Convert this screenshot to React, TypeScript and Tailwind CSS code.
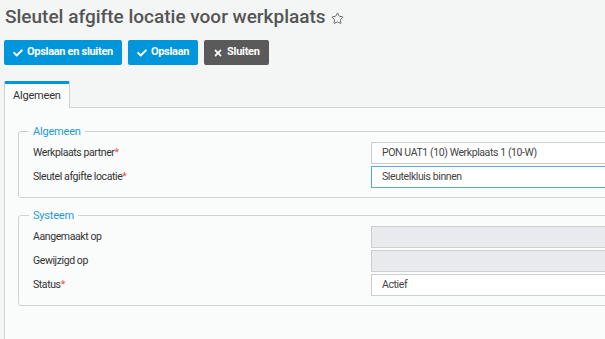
import { Star } from 'lucide-react'
import { FaCheck, FaTimes } from 'react-icons/fa'

type Row = {
  label: string
  required?: boolean
  value?: string
  disabled?: boolean
  focused?: boolean
}

const ALGEMEEN: Row[] = [
  { label: 'Werkplaats partner', required: true, value: 'PON UAT1 (10) Werkplaats 1 (10-W)' },
  { label: 'Sleutel afgifte locatie', required: true, value: 'Sleutelkluis binnen', focused: true },
]

const SYSTEEM: Row[] = [
  { label: 'Aangemaakt op', disabled: true },
  { label: 'Gewijzigd op', disabled: true },
  { label: 'Status', required: true, value: 'Actief' },
]

function Section({ title, rows }: { title: string; rows: Row[] }) {
  return (
    <fieldset className="border border-[#cfd2d3] rounded-[3px] pl-[10px] pb-[9px]">
      <legend className="px-1 text-[11px] leading-[15px] tracking-[-0.2px] text-[#1f9ad8]">{title}</legend>
      <div className="flex flex-col gap-[2px] mt-[3px]">
        {rows.map((r) => (
          <div key={r.label} className="flex items-center h-[22px]">
            <div className="w-[342px] pl-1 text-[10.5px] tracking-[-0.4px] text-[#333]">
              {r.label}
              {r.required && <span className="text-[#e2524b]">*</span>}
            </div>
            <div
              className={`flex-1 h-[22px] flex items-center px-[10px] text-[10.5px] tracking-[-0.4px] text-[#444] border ${
                r.focused ? 'border-[#55a9d6]' : 'border-[#ccced2]'
              } ${r.disabled ? 'bg-[#e8eaed]' : 'bg-white'}`}
            >
              {r.value}
            </div>
          </div>
        ))}
      </div>
    </fieldset>
  )
}

export default function App() {
  return (
    <div className="w-[605px] h-[339px] overflow-hidden bg-[#f4f6f6] font-['Roboto',sans-serif]">
      <div className="w-[660px]">
        {/* Header */}
        <div className="flex items-center gap-[5px] pl-[5px] pt-[5px] h-[29px]">
          <h1 className="text-[19px] leading-[24px] font-medium text-[#555]">
            Sleutel afgifte locatie voor werkplaats
          </h1>
          <Star size={13} strokeWidth={1.6} className="text-[#555] mt-[2px]" />
        </div>

        {/* Toolbar */}
        <div className="flex gap-[6px] pl-[4px] mt-[11px]">
          <button type="button" className="h-[25px] px-[9px] rounded-[2px] bg-[#0096db] text-white text-[11px] tracking-[-0.3px] font-bold flex items-center gap-[4px]">
            <FaCheck size={10} />
            Opslaan en sluiten
          </button>
          <button type="button" className="h-[25px] px-[9px] rounded-[2px] bg-[#0096db] text-white text-[11px] tracking-[-0.3px] font-bold flex items-center gap-[4px]">
            <FaCheck size={10} />
            Opslaan
          </button>
          <button type="button" className="h-[25px] px-[9px] rounded-[2px] bg-[#5a5a5a] text-white text-[11px] tracking-[-0.3px] font-bold flex items-center gap-[4px]">
            <FaTimes size={10} />
            Sluiten
          </button>
        </div>

        {/* Tabs */}
        <div className="flex pl-[4px] mt-[16px]">
          <div className="h-[27px] -mb-px px-[8px] flex items-center bg-[#fafbfb] border border-[#cfd2d3] border-b-0 border-t-[3px] border-t-[#0096db] rounded-t-[2px] text-[11px] tracking-[-0.2px] text-[#333] relative z-10">
            Algemeen
          </div>
        </div>
        <div className="ml-[4px] border-l border-t border-[#cfd2d3] bg-[#fafbfb] pl-[13px] pt-[16px] pb-[40px] flex flex-col gap-[10px]">
          <Section title="Algemeen" rows={ALGEMEEN} />
          <Section title="Systeem" rows={SYSTEEM} />
        </div>
      </div>
    </div>
  )
}
